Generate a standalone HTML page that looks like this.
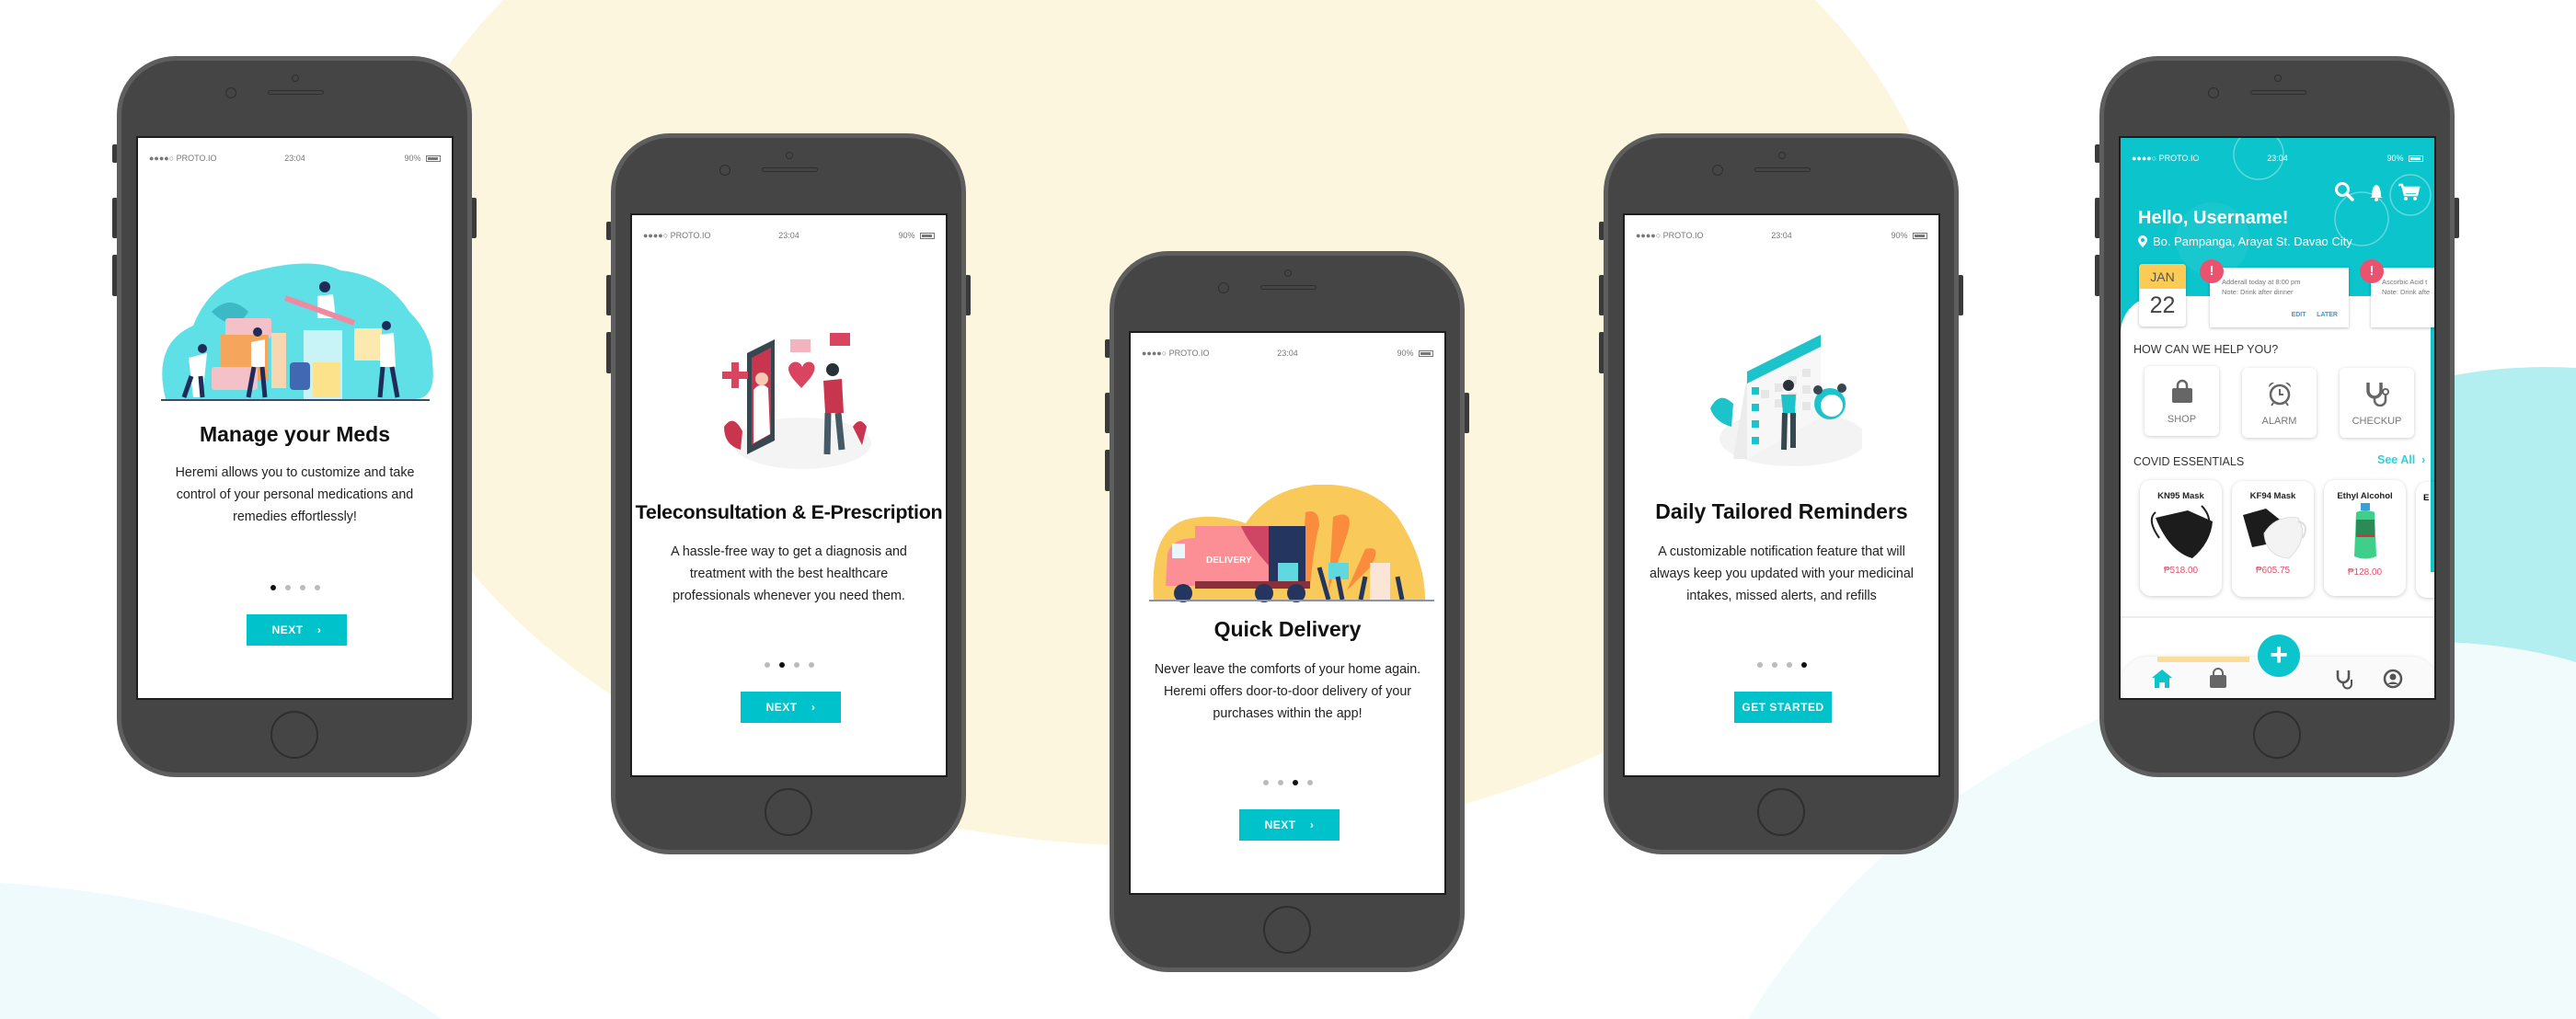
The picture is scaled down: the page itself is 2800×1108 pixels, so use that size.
<!DOCTYPE html>
<html><head><meta charset="utf-8"><style>
*{margin:0;padding:0;box-sizing:border-box}
body{width:2800px;height:1108px;overflow:hidden;background:#fff;position:relative;font-family:"Liberation Sans",sans-serif}
.abs{position:absolute}
.phone{position:absolute;width:386px;height:784px}
.body{position:absolute;inset:0;border-radius:64px;background:#454545;border:5px solid #5e5e5e}
.btn-side{position:absolute;width:6px;background:#3a3a3a;border-radius:2px}
.screen{position:absolute;left:21px;top:87px;width:345px;height:613px;background:#fff;border:2px solid #1e1e1e;overflow:hidden}
.cam{position:absolute;left:190px;top:20px;width:8px;height:8px;border:1.5px solid #2e2e2e;border-radius:50%}
.cam2{position:absolute;left:118px;top:34px;width:12px;height:12px;border:1.5px solid #2e2e2e;border-radius:50%}
.spk{position:absolute;left:164px;top:37px;width:61px;height:5px;border:1.5px solid #2e2e2e;border-radius:3px}
.home{position:absolute;left:167px;top:712px;width:52px;height:52px;border:2px solid #2e2e2e;border-radius:50%}
.status{position:absolute;top:17px;left:12px;right:12px;height:12px;font-size:9px;color:#777}
.status .l{position:absolute;left:0}
.status .c{position:absolute;left:0;right:0;text-align:center}
.status .r{position:absolute;right:0}
.bat{display:inline-block;width:16px;height:7px;border:1px solid #777;vertical-align:-1px;margin-left:3px;padding:1px}
.bat i{display:block;height:100%;width:90%;background:#777}
.title{position:absolute;left:0;right:0;text-align:center;font-weight:bold;font-size:23px;color:#111}
.txt{position:absolute;left:24px;right:24px;text-align:center;font-size:14.3px;line-height:24px;color:#222}
.dots{position:absolute;top:486px;left:0;right:0;text-align:center;font-size:0}
.dots i{display:inline-block;width:6px;height:6px;border-radius:50%;background:#bbb;margin:0 5px}
.dots i.a{background:#111}
.next{position:absolute;top:518px;height:34px;background:#00c2cb;color:#fff;font-weight:bold;font-size:12px;text-align:center;line-height:34px;letter-spacing:.5px}
</style></head><body>
<!-- background -->
<svg class="abs" style="left:0;top:0" width="2800" height="1108">
<ellipse cx="1260" cy="330" rx="860" ry="590" fill="#fdf6de"/>
<path d="M2620 420 Q2700 395 2800 400 L2800 735 Q2700 730 2600 760 Z" fill="#b3eef1"/>
<path d="M1900 1108 Q2100 780 2560 700 Q2700 690 2800 720 L2800 1108Z" fill="#f2fbfc"/>
<path d="M0 960 Q300 980 480 1108 L0 1108Z" fill="#eefafb"/>
</svg>

<!-- PHONE TEMPLATE via repeated markup -->
<!-- Phone 1 -->
<div class="phone" style="left:127px;top:61px">
<div class="btn-side" style="left:-5px;top:96px;height:20px"></div><div class="btn-side" style="left:-5px;top:154px;height:44px"></div><div class="btn-side" style="left:-5px;top:216px;height:45px"></div><div class="btn-side" style="right:-5px;top:154px;height:44px"></div>
<div class="body"></div><div class="cam"></div><div class="cam2"></div><div class="spk"></div><div class="home"></div>
<div class="screen">
<div class="status"><span class="l">●●●●○ PROTO.IO</span><span class="c">23:04</span><span class="r">90% <span class="bat"><i></i></span></span></div>
<svg class="abs" style="left:20px;top:134px" width="304" height="162" viewBox="0 0 304 162">
<path d="M10 150 Q-5 90 40 70 Q60 20 110 10 Q170 -5 200 10 Q250 15 275 55 Q300 80 300 110 Q305 150 280 150Z" fill="#5ee0e6"/>
<path d="M60 55 Q80 35 100 55 Q85 80 60 55Z" fill="#3bb9c4"/>
<rect x="75" y="62" width="50" height="22" rx="3" fill="#f4c1c9"/><rect x="70" y="80" width="52" height="50" fill="#f6a55d"/>
<rect x="60" y="115" width="50" height="25" rx="3" fill="#f4c1c9"/>
<rect x="160" y="75" width="42" height="75" fill="#c8f4f7"/><rect x="170" y="110" width="30" height="38" fill="#fce28a"/>
<rect x="145" y="110" width="22" height="30" rx="4" fill="#4169b3"/>
<rect x="125" y="78" width="16" height="60" fill="#f7d6b2"/>
<rect x="215" y="73" width="30" height="35" fill="#fce9b0"/>
<circle cx="50" cy="95" r="5" fill="#1f2b5a"/><path d="M35 105 L55 100 L50 148 L40 148Z" fill="#fff"/><path d="M38 125 L30 148 M48 125 L50 148" stroke="#1f2b5a" stroke-width="5"/>
<circle cx="110" cy="77" r="5" fill="#1f2b5a"/><path d="M103 88 L118 85 L118 115 L103 115Z" fill="#fff"/><path d="M106 115 L100 148 M115 115 L118 148" stroke="#1f2b5a" stroke-width="5"/>
<circle cx="183" cy="28" r="6" fill="#1f2b5a"/><path d="M175 38 L192 36 L195 62 L175 62Z" fill="#fff"/><path d="M140 40 L215 67" stroke="#f08aa0" stroke-width="6"/>
<circle cx="250" cy="70" r="5" fill="#1f2b5a"/><path d="M243 80 L258 78 L260 115 L243 115Z" fill="#fff"/><path d="M246 115 L243 148 M256 115 L262 148" stroke="#1f2b5a" stroke-width="5"/>
<rect x="5" y="150" width="292" height="2" fill="#3a4a6b"/>
</svg>
<div class="title" style="top:309px">Manage your Meds</div>
<div class="txt" style="top:352px">Heremi allows you to customize and take control of your personal medications and remedies effortlessly!</div>
<div class="dots"><i class="a"></i><i></i><i></i><i></i></div>
<div class="next" style="left:118px;width:109px">NEXT &nbsp;&nbsp;&nbsp;›</div>
</div></div>

<!-- Phone 2 -->
<div class="phone" style="left:664px;top:145px">
<div class="btn-side" style="left:-5px;top:96px;height:20px"></div><div class="btn-side" style="left:-5px;top:154px;height:44px"></div><div class="btn-side" style="left:-5px;top:216px;height:45px"></div><div class="btn-side" style="right:-5px;top:154px;height:44px"></div>
<div class="body"></div><div class="cam"></div><div class="cam2"></div><div class="spk"></div><div class="home"></div>
<div class="screen">
<div class="status"><span class="l">●●●●○ PROTO.IO</span><span class="c">23:04</span><span class="r">90% <span class="bat"><i></i></span></span></div>
<svg class="abs" style="left:90px;top:120px" width="170" height="160" viewBox="0 0 170 160">
<ellipse cx="95" cy="128" rx="75" ry="28" fill="#f4f4f4"/>
<path d="M35 30 L65 15 L65 125 L35 140Z" fill="#37474f"/><path d="M40 35 L61 24 L61 118 L40 130Z" fill="#c7354f"/>
<path d="M42 70 Q50 60 58 68 L60 118 L42 128Z" fill="#fff"/><circle cx="51" cy="58" r="7" fill="#f6c9b5"/>
<path d="M8 50 h10 v-10 h8 v10 h10 v8 h-10 v10 h-8 v-10 h-10z" fill="#d94460"/>
<path d="M85 58 Q75 45 85 40 Q92 38 95 45 Q98 38 105 40 Q113 45 103 58 L94 68Z" fill="#d94460"/>
<rect x="82" y="15" width="22" height="14" fill="#f2b4c0"/><rect x="125" y="8" width="22" height="14" fill="#d94460"/>
<circle cx="128" cy="48" r="7" fill="#263238"/><path d="M118 60 L138 58 L140 95 L120 95Z" fill="#c7354f"/>
<path d="M123 95 L122 140 M134 95 L138 135" stroke="#455a64" stroke-width="7"/>
<path d="M10 110 Q20 95 30 115 L28 135 Q10 130 10 110Z" fill="#c7354f"/><path d="M150 110 Q158 98 165 110 L160 130Z" fill="#c7354f"/>
</svg>
<div class="title" style="top:311px;font-size:21.5px;letter-spacing:-.3px">Teleconsultation &amp; E-Prescription</div>
<div class="txt" style="top:354px">A hassle-free way to get a diagnosis and treatment with the best healthcare professionals whenever you need them.</div>
<div class="dots"><i></i><i class="a"></i><i></i><i></i></div>
<div class="next" style="left:118px;width:109px">NEXT &nbsp;&nbsp;&nbsp;›</div>
</div></div>

<!-- Phone 3 -->
<div class="phone" style="left:1206px;top:273px">
<div class="btn-side" style="left:-5px;top:96px;height:20px"></div><div class="btn-side" style="left:-5px;top:154px;height:44px"></div><div class="btn-side" style="left:-5px;top:216px;height:45px"></div><div class="btn-side" style="right:-5px;top:154px;height:44px"></div>
<div class="body"></div><div class="cam"></div><div class="cam2"></div><div class="spk"></div><div class="home"></div>
<div class="screen">
<div class="status"><span class="l">●●●●○ PROTO.IO</span><span class="c">23:04</span><span class="r">90% <span class="bat"><i></i></span></span></div>
<svg class="abs" style="left:20px;top:165px" width="310" height="135" viewBox="0 0 310 135">
<path d="M5 125 Q0 50 40 38 Q70 30 105 42 Q130 5 180 0 Q240 -3 270 35 Q300 80 300 125Z" fill="#f9c95a"/>
<path d="M170 30 Q185 25 185 45 Q180 60 175 110 L165 110Z" fill="#fb8c3e"/><path d="M200 35 Q225 25 215 55 L195 115Z" fill="#fb8c3e"/><path d="M235 70 Q255 65 240 90 L215 115Z" fill="#fb8c3e"/>
<rect x="50" y="45" width="100" height="65" fill="#fc8f96"/><path d="M100 45 L150 45 L150 108 Q110 70 100 45Z" fill="#cf4564"/>
<rect x="130" y="45" width="40" height="65" fill="#24365f"/>
<path d="M20 75 Q25 58 50 58 L50 110 L18 110Z" fill="#fc8f96"/><rect x="25" y="64" width="14" height="16" fill="#e9f6fb"/>
<rect x="50" y="105" width="125" height="8" fill="#8b2f3a"/>
<circle cx="37" cy="118" r="10" fill="#24365f"/><circle cx="125" cy="118" r="10" fill="#24365f"/><circle cx="160" cy="118" r="10" fill="#24365f"/>
<text x="62" y="85" font-size="10" font-weight="bold" fill="#fff" font-family="Liberation Sans">DELIVERY</text>
<rect x="140" y="85" width="22" height="20" fill="#5fd8df"/><rect x="195" y="85" width="22" height="18" fill="#5fd8df"/>
<path d="M185 90 L195 125 M205 100 L210 125 M235 100 L230 125 M270 100 L275 125" stroke="#24365f" stroke-width="5"/>
<rect x="240" y="85" width="22" height="40" fill="#fbe5d6"/>
<rect x="0" y="125" width="310" height="2" fill="#8a93ad"/>
</svg>
<div class="title" style="top:309px">Quick Delivery</div>
<div class="txt" style="top:354px">Never leave the comforts of your home again. Heremi offers door-to-door delivery of your purchases within the app!</div>
<div class="dots"><i></i><i></i><i class="a"></i><i></i></div>
<div class="next" style="left:118px;width:109px">NEXT &nbsp;&nbsp;&nbsp;›</div>
</div></div>

<!-- Phone 4 -->
<div class="phone" style="left:1743px;top:145px">
<div class="btn-side" style="left:-5px;top:96px;height:20px"></div><div class="btn-side" style="left:-5px;top:154px;height:44px"></div><div class="btn-side" style="left:-5px;top:216px;height:45px"></div><div class="btn-side" style="right:-5px;top:154px;height:44px"></div>
<div class="body"></div><div class="cam"></div><div class="cam2"></div><div class="spk"></div><div class="home"></div>
<div class="screen">
<div class="status"><span class="l">●●●●○ PROTO.IO</span><span class="c">23:04</span><span class="r">90% <span class="bat"><i></i></span></span></div>
<svg class="abs" style="left:88px;top:115px" width="170" height="160" viewBox="0 0 170 160">
<ellipse cx="95" cy="128" rx="80" ry="30" fill="#f3f3f3"/>
<path d="M45 55 L125 15 L125 105 L45 150Z" fill="#f7f7f7"/><path d="M45 55 L125 15 L125 28 L45 68Z" fill="#1dc3cb"/>
<path d="M30 150 L45 60 L45 150Z" fill="#ececec"/>
<g fill="#e6e6e6"><rect x="60" y="75" width="9" height="9"/><rect x="75" y="68" width="9" height="9"/><rect x="90" y="60" width="9" height="9"/><rect x="105" y="52" width="9" height="9"/><rect x="75" y="85" width="9" height="9"/><rect x="90" y="78" width="9" height="9"/><rect x="105" y="70" width="9" height="9"/><rect x="90" y="96" width="9" height="9"/><rect x="105" y="88" width="9" height="9"/></g>
<g fill="#1dc3cb"><rect x="50" y="72" width="8" height="8"/><rect x="50" y="90" width="8" height="8"/><rect x="50" y="108" width="8" height="8"/><rect x="50" y="126" width="8" height="8"/></g>
<circle cx="135" cy="90" r="17" fill="#1dc3cb"/><circle cx="137" cy="92" r="12" fill="#fff"/><circle cx="122" cy="75" r="5" fill="#37474f"/><circle cx="148" cy="73" r="5" fill="#37474f"/>
<circle cx="90" cy="70" r="6" fill="#263238"/><path d="M82 80 L98 80 L97 100 L84 100Z" fill="#1dc3cb"/><path d="M86 100 L85 140 M95 100 L95 138" stroke="#37474f" stroke-width="6"/>
<path d="M5 95 Q15 75 30 90 L28 115 Q10 110 5 95Z" fill="#1dc3cb"/>
</svg>
<div class="title" style="top:309px">Daily Tailored Reminders</div>
<div class="txt" style="top:354px">A customizable notification feature that will always keep you updated with your medicinal intakes, missed alerts, and refills</div>
<div class="dots"><i></i><i></i><i></i><i class="a"></i></div>
<div class="next" style="left:119px;width:106px">GET STARTED</div>
</div></div>

<!-- Phone 5 -->
<div class="phone" style="left:2282px;top:61px">
<div class="btn-side" style="left:-5px;top:96px;height:20px"></div><div class="btn-side" style="left:-5px;top:154px;height:44px"></div><div class="btn-side" style="left:-5px;top:216px;height:45px"></div><div class="btn-side" style="right:-5px;top:154px;height:44px"></div>
<div class="body"></div><div class="cam"></div><div class="cam2"></div><div class="spk"></div><div class="home"></div>
<div class="screen" style="background:#fff">
<div class="abs" style="left:0;top:0;width:345px;height:250px;background:#0bc4cc"></div>
<svg class="abs" style="left:0;top:0" width="345" height="200"><g fill="none" stroke="rgba(255,255,255,.35)" stroke-width="1.5"><circle cx="150" cy="18" r="27"/><circle cx="262" cy="88" r="29"/><circle cx="315" cy="62" r="22"/></g><circle cx="100" cy="110" r="40" fill="rgba(255,255,255,.06)"/></svg>
<div class="abs" style="left:0;top:172px;width:345px;height:450px;background:#fff;border-top-left-radius:40px"></div>
<div class="abs" style="right:0;top:172px;width:4px;height:300px;background:#0bc4cc"></div>
<div class="status" style="color:#fff"><span class="l">●●●●○ PROTO.IO</span><span class="c">23:04</span><span class="r">90% <span class="bat" style="border-color:#fff"><i style="background:#fff"></i></span></span></div>
<svg class="abs" style="left:232px;top:46px" width="100" height="26" viewBox="0 0 100 26">
<circle cx="9" cy="10" r="6.5" fill="none" stroke="#fff" stroke-width="3"/><path d="M14 15 L20 21" stroke="#fff" stroke-width="3.5" stroke-linecap="round"/>
<path d="M41 18 Q41 6 46 5 Q51 6 51 18 L53 19 L39 19Z" fill="#fff"/><circle cx="46" cy="21" r="2" fill="#fff"/>
<path d="M70 5 L74 5 L77 16 L90 16 L92 8 L75 8" fill="none" stroke="#fff" stroke-width="2.5"/><path d="M76 9 H91 L89 14 H77Z" fill="#fff"/><circle cx="78" cy="20" r="2" fill="#fff"/><circle cx="88" cy="20" r="2" fill="#fff"/>
</svg>
<div class="abs" style="left:19px;top:76px;color:#fff;font-weight:bold;font-size:20px">Hello, Username!</div>
<div class="abs" style="left:19px;top:105px;color:#fff;font-size:13px"><svg width="10" height="13" viewBox="0 0 10 13" style="vertical-align:-2px;margin-right:6px"><path d="M5 0 A5 5 0 0 1 10 5 Q10 8 5 13 Q0 8 0 5 A5 5 0 0 1 5 0Z" fill="#fff"/><circle cx="5" cy="5" r="2" fill="#0bc4cc"/></svg>Bo. Pampanga, Arayat St. Davao City</div>
<div class="abs" style="left:20px;top:137px;width:51px;height:68px;background:#fff;border-radius:4px;box-shadow:0 1px 3px rgba(0,0,0,.25);overflow:hidden;text-align:center">
<div style="height:27px;background:#fbcb56;color:#555;font-size:14px;line-height:28px">JAN</div><div style="font-size:25px;color:#444;line-height:36px">22</div></div>
<div class="abs" style="left:97px;top:141px;width:151px;height:65px;background:#fff;box-shadow:0 1px 3px rgba(0,0,0,.25);font-size:7.5px;color:#777;padding:10px 0 0 13px;line-height:11px">Adderall today at 8:00 pm<br>Note: Drink after dinner<div style="position:absolute;right:12px;top:46px;color:#2d9cdb;font-weight:bold;font-size:7px">EDIT &nbsp;&nbsp;&nbsp;&nbsp; LATER</div></div>
<div class="abs" style="left:272px;top:141px;width:80px;height:65px;background:#fff;box-shadow:0 1px 3px rgba(0,0,0,.25);font-size:7.5px;color:#777;padding:10px 0 0 12px;line-height:11px;white-space:nowrap">Ascorbic Acid t<br>Note: Drink afte</div>
<div class="abs" style="left:86px;top:132px;width:26px;height:26px;border-radius:50%;background:#ea5370;color:#fff;font-weight:bold;text-align:center;line-height:26px;font-size:15px">!</div>
<div class="abs" style="left:260px;top:132px;width:26px;height:26px;border-radius:50%;background:#ea5370;color:#fff;font-weight:bold;text-align:center;line-height:26px;font-size:15px">!</div>
<div class="abs" style="left:14px;top:223px;font-size:12.5px;color:#333">HOW CAN WE HELP YOU?</div>
<div class="abs" style="left:26px;top:248px;width:81px;height:76px;border-radius:6px;box-shadow:0 1px 4px rgba(0,0,0,.2);text-align:center"><svg width="28" height="28" viewBox="0 0 28 28" style="margin-top:14px"><path d="M9 10 V7 A5 5 0 0 1 19 7 V10" fill="none" stroke="#666" stroke-width="2.5"/><rect x="3" y="10" width="22" height="16" rx="2" fill="#666"/></svg><div style="font-size:11px;color:#777;margin-top:5px">SHOP</div></div>
<div class="abs" style="left:132px;top:250px;width:81px;height:76px;border-radius:6px;box-shadow:0 1px 4px rgba(0,0,0,.2);text-align:center"><svg width="30" height="28" viewBox="0 0 30 28" style="margin-top:14px"><circle cx="15" cy="15" r="10" fill="none" stroke="#666" stroke-width="2.5"/><path d="M15 9 V15 H19" fill="none" stroke="#666" stroke-width="2"/><path d="M3 7 A5 5 0 0 1 9 2Z M27 7 A5 5 0 0 0 21 2Z" fill="#666"/><path d="M8 24 L6 27 M22 24 L24 27" stroke="#666" stroke-width="2"/></svg><div style="font-size:11px;color:#777;margin-top:5px">ALARM</div></div>
<div class="abs" style="left:238px;top:250px;width:81px;height:76px;border-radius:6px;box-shadow:0 1px 4px rgba(0,0,0,.2);text-align:center"><svg width="30" height="28" viewBox="0 0 30 28" style="margin-top:14px"><path d="M5 2 V11 A7 7 0 0 0 19 11 V2" fill="none" stroke="#666" stroke-width="3.5"/><path d="M12 18 V21 A5 5 0 0 0 24 21 V15" fill="none" stroke="#666" stroke-width="2.5"/><circle cx="24" cy="12" r="3" fill="none" stroke="#666" stroke-width="2"/></svg><div style="font-size:11px;color:#777;margin-top:5px">CHECKUP</div></div>
<div class="abs" style="left:14px;top:345px;font-size:12.5px;color:#333">COVID ESSENTIALS</div>
<div class="abs" style="left:279px;top:343px;font-size:12.5px;color:#2dd3dc;font-weight:bold">See All &nbsp;›</div>
<div class="abs" style="left:21px;top:372px;width:89px;height:126px;border-radius:12px;box-shadow:0 1px 5px rgba(0,0,0,.2);text-align:center"><div style="font-size:9.5px;font-weight:bold;color:#222;margin-top:12px">KN95 Mask</div>
<svg width="76" height="65" viewBox="0 0 76 65"><path d="M10 12 Q0 20 14 40 M60 5 Q70 15 68 28" fill="none" stroke="#222" stroke-width="2"/><path d="M10 18 L45 10 L72 22 Q70 45 50 62 Q25 55 10 18Z" fill="#1c1c1c"/></svg>
<div style="font-size:10px;color:#e2506b">₱518.00</div></div>
<div class="abs" style="left:121px;top:373px;width:89px;height:126px;border-radius:12px;box-shadow:0 1px 5px rgba(0,0,0,.2);text-align:center"><div style="font-size:9.5px;font-weight:bold;color:#222;margin-top:11px">KF94 Mask</div>
<svg width="76" height="65" viewBox="0 0 76 65"><path d="M5 15 L30 8 L45 20 L40 45 L15 50Z" fill="#1c1c1c"/><path d="M28 35 Q40 15 65 18 Q78 40 55 62 Q30 60 28 35Z" fill="#f3f3f3" stroke="#ddd"/><path d="M65 22 Q78 25 70 40" fill="none" stroke="#ddd" stroke-width="2"/></svg>
<div style="font-size:10px;color:#e2506b">₱605.75</div></div>
<div class="abs" style="left:221px;top:372px;width:89px;height:126px;border-radius:12px;box-shadow:0 1px 5px rgba(0,0,0,.2);text-align:center"><div style="font-size:9.5px;font-weight:bold;color:#222;margin-top:12px">Ethyl Alcohol</div>
<svg width="76" height="67" viewBox="0 0 76 67"><rect x="33" y="2" width="10" height="8" fill="#3aa0d8"/><path d="M28 12 Q38 8 48 12 L50 60 Q38 65 26 60Z" fill="#3fcf8a"/><rect x="28" y="20" width="20" height="18" fill="#2b8a55"/><rect x="28" y="36" width="20" height="3" fill="#d8333a"/></svg>
<div style="font-size:10px;color:#e2506b">₱128.00</div></div>
<div class="abs" style="left:321px;top:374px;width:40px;height:126px;border-radius:12px;box-shadow:0 1px 5px rgba(0,0,0,.2);font-size:9.5px;font-weight:bold;padding:12px 0 0 8px">E</div>
<div class="abs" style="left:0;top:520px;width:345px;height:2px;background:#eee"></div>
<div class="abs" style="left:0;top:564px;width:345px;height:50px;background:#fafafa;border-top-left-radius:30px;border-top-right-radius:30px;box-shadow:0 -1px 3px rgba(0,0,0,.08)"></div>
<div class="abs" style="left:40px;top:564px;width:100px;height:6px;background:#f9c95a;opacity:.6"></div>
<div class="abs" style="left:149px;top:540px;width:46px;height:46px;border-radius:50%;background:#0bc4cc;color:#fff;font-size:34px;text-align:center;line-height:44px;font-weight:bold">+</div>
<svg class="abs" style="left:34px;top:576px" width="280" height="26" viewBox="0 0 280 26">
<path d="M0 11 L11 2 L22 11 H19 V22 H14 V16 H8 V22 H3 V11Z" fill="#0bc4cc"/>
<path d="M67 8 V6 A5 5 0 0 1 77 6 V8" fill="none" stroke="#666" stroke-width="2"/><rect x="63" y="8" width="18" height="14" rx="2" fill="#666"/>
<path d="M202 3 V10 A6 6 0 0 0 214 10 V3" fill="none" stroke="#555" stroke-width="2.5"/><path d="M208 16 V18 A4 4 0 0 0 217 18 V13" fill="none" stroke="#555" stroke-width="2"/>
<circle cx="262" cy="12" r="9" fill="none" stroke="#555" stroke-width="2.5"/><circle cx="262" cy="10" r="3.5" fill="#555"/><path d="M256 18 Q262 13 268 18" fill="#555"/>
</svg>
</div></div>
</body></html>
